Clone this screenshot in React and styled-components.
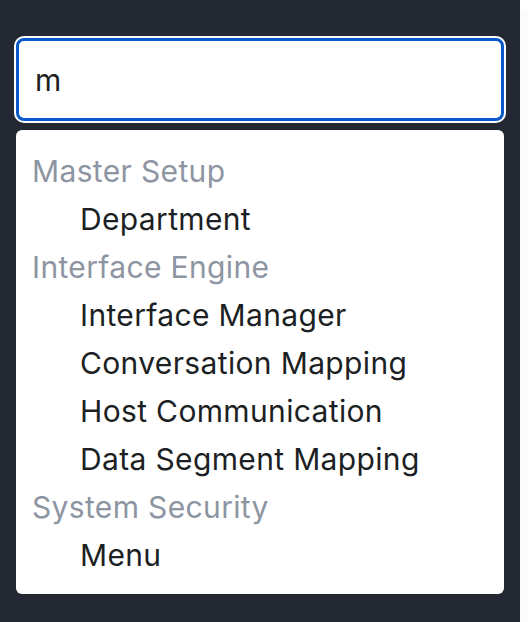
import React, { useState } from 'react';
import styled, { createGlobalStyle } from 'styled-components';

const GlobalStyle = createGlobalStyle`
  body {
    margin: 0;
    background: #ffffff;
    font-family: Inter, "Noto Sans", sans-serif;
  }
`;

const Page = styled.div`
  display: grid;
  grid-template-columns: 520px 8px;
  height: 622px;
`;

const Panel = styled.div`
  background: #232833;
  padding: 38px 16px 0;
  display: flex;
  flex-direction: column;
  gap: 9px;
`;

const Edge = styled.div`
  margin-top: 11px;
  background: #fbfbfc;
`;

const SearchInput = styled.input`
  box-sizing: border-box;
  width: 100%;
  height: 83px;
  margin: 0;
  padding: 0 16px;
  border: 3px solid #0a57c9;
  border-radius: 8px;
  box-shadow: 0 0 0 2px #ffffff;
  background: #ffffff;
  color: #1c1f24;
  font-family: Inter, "Noto Sans", sans-serif;
  font-size: 30px;
  letter-spacing: 0.3px;
  outline: none;
`;

const Menu = styled.div`
  background: #ffffff;
  border-radius: 6px;
  padding: 17px 0 15px;
`;

const Row = styled.div`
  height: 48px;
  line-height: 48px;
  font-size: 30px;
  letter-spacing: 0.35px;
  padding-left: ${p => (p.$group ? '16px' : '64px')};
  color: ${p => (p.$group ? '#8d95a2' : '#1c1f24')};
  white-space: nowrap;
`;

const groups = [
  { label: 'Master Setup', items: ['Department'] },
  {
    label: 'Interface Engine',
    items: ['Interface Manager', 'Conversation Mapping', 'Host Communication', 'Data Segment Mapping'],
  },
  { label: 'System Security', items: ['Menu'] },
];

const App = () => {
  const [query, setQuery] = useState('m');

  return (
    <Page>
      <GlobalStyle />
      <Panel>
        <SearchInput value={query} onChange={e => setQuery(e.target.value)} />
        <Menu>
          {groups.map(group => (
            <React.Fragment key={group.label}>
              <Row $group>{group.label}</Row>
              {group.items.map(item => (
                <Row key={item}>{item}</Row>
              ))}
            </React.Fragment>
          ))}
        </Menu>
      </Panel>
      <Edge />
    </Page>
  );
};

export default App;
